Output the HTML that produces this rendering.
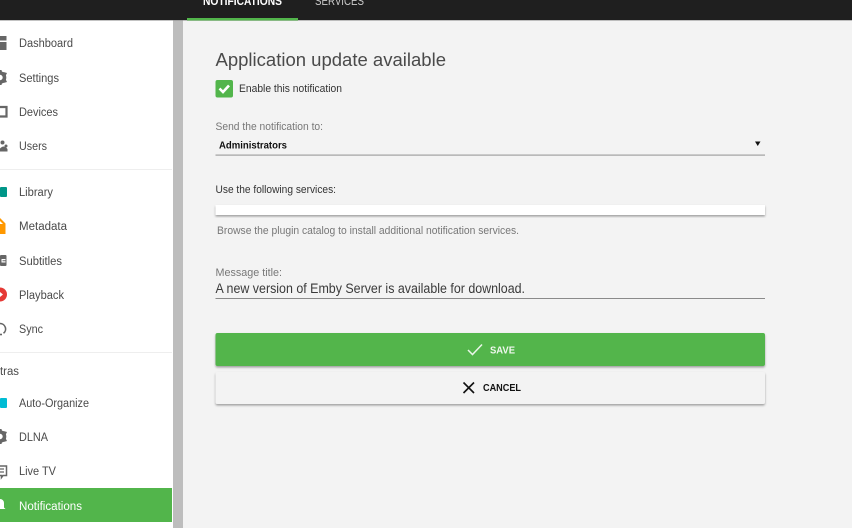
<!DOCTYPE html>
<html><head><meta charset="utf-8"><style>
html,body{margin:0;padding:0;width:852px;height:528px;overflow:hidden;background:#f3f3f3}
svg{display:block}
text{font-family:"Liberation Sans",sans-serif;font-size:11.500px;fill:#4a4a4a}
</style></head><body>
<svg width="852" height="528" viewBox="0 0 852 528" xmlns="http://www.w3.org/2000/svg">
<defs><filter id="s" x="-2%" y="-20%" width="104%" height="150%"><feDropShadow dx="0" dy="1.500" stdDeviation="1" flood-color="#000" flood-opacity=".35"/></filter></defs>
<rect width="852" height="528" fill="#f3f3f3"/>
<rect x="0" y="20" width="173" height="508" fill="#fff"/>
<rect x="173" y="20" width="10" height="508" fill="#bdbdbd"/>
<rect x="0" y="0" width="852" height="20" fill="#1f1f1f"/>
<rect x="0" y="20" width="852" height="1" fill="#888" opacity=".5"/>
<rect x="187" y="18" width="111" height="2.500" fill="#52b54b"/>
<text x="203" y="5" textLength="79" lengthAdjust="spacingAndGlyphs" style="fill:#fff;font-weight:bold;font-size:11.500px">NOTIFICATIONS</text>
<text x="315" y="5" textLength="49" lengthAdjust="spacingAndGlyphs" style="fill:#ccc;font-size:11.500px">SERVICES</text>

<rect x="0" y="169" width="172" height="1" fill="#eee"/>
<rect x="0" y="352" width="172" height="1" fill="#eee"/>

<text x="19" y="47" textLength="54" lengthAdjust="spacingAndGlyphs">Dashboard</text>
<text x="19" y="82" textLength="40" lengthAdjust="spacingAndGlyphs">Settings</text>
<text x="19" y="116" textLength="39" lengthAdjust="spacingAndGlyphs">Devices</text>
<text x="19" y="150" textLength="28" lengthAdjust="spacingAndGlyphs">Users</text>
<text x="19" y="196" textLength="34" lengthAdjust="spacingAndGlyphs">Library</text>
<text x="19" y="230" textLength="48" lengthAdjust="spacingAndGlyphs">Metadata</text>
<text x="19" y="265" textLength="43" lengthAdjust="spacingAndGlyphs">Subtitles</text>
<text x="19" y="299" textLength="45" lengthAdjust="spacingAndGlyphs">Playback</text>
<text x="19" y="333" textLength="24" lengthAdjust="spacingAndGlyphs">Sync</text>
<text x="0" y="375" textLength="19" lengthAdjust="spacingAndGlyphs">tras</text>
<text x="19" y="407" textLength="70" lengthAdjust="spacingAndGlyphs">Auto-Organize</text>
<text x="19" y="441" textLength="29" lengthAdjust="spacingAndGlyphs">DLNA</text>
<text x="19" y="475" textLength="37" lengthAdjust="spacingAndGlyphs">Live TV</text>
<rect x="0" y="488" width="172" height="34" fill="#52b54b"/>
<text x="19" y="510" textLength="63" lengthAdjust="spacingAndGlyphs" style="fill:#fff">Notifications</text>

<!-- sidebar icons -->
<path d="M0 36h6.500v4.500H0zM0 42h6.500v8H0z" fill="#666"/>
<circle cx="0" cy="77.500" r="4.500" fill="none" stroke="#666" stroke-width="3.600"/>
<path d="M-1.500 70h3l.5 2h-4zM-1.500 85h3l.5-2h-4zM3.500 72l3.500 1-1.500 3-3-1zM3.500 83l3.500-1-1.500-3-3 1z" fill="#666"/>
<path d="M0 107h6.500v9.500H0" fill="none" stroke="#666" stroke-width="2.200"/>
<circle cx="2.500" cy="142.500" r="2" fill="#666"/><circle cx="6" cy="146" r="1.500" fill="#666"/><path d="M0 151.500v-3q2-2 3.500-2 2 0 4 2.500v2.500z" fill="#666"/>
<rect x="0" y="187" width="7" height="10" rx="1" fill="#009688"/>
<path d="M0 218l5.500 5.500v10.500H0z" fill="#ff9800"/><path d="M0 221l3 3H0z" fill="#fff"/>
<rect x="0" y="255" width="6.500" height="11" rx="1" fill="#666"/><path d="M1.500 259h4v1.200h-3v1h3v1.300h-4z" fill="#fff"/>
<circle cx="0" cy="294.500" r="7" fill="#e53935"/><path d="M0 292v5l3-2.500z" fill="#fff"/>
<path d="M0 323.500a5.500 5.500 0 0 1 3.500 9.800" fill="none" stroke="#666" stroke-width="1.600"/>
<path d="M0 334.500h2" stroke="#666" stroke-width="1.600"/>
<rect x="0" y="398" width="7" height="10" rx="1" fill="#00bcd4"/>
<circle cx="0" cy="436.500" r="4.500" fill="none" stroke="#666" stroke-width="3.600"/>
<path d="M-1.500 429h3l.5 2h-4zM-1.500 444h3l.5-2h-4zM3.500 431l3.500 1-1.500 3-3-1zM3.500 442l3.500-1-1.500-3-3 1z" fill="#666"/>
<path d="M0 466h6.500v9.500H3L1.500 477.500V475.500H0" fill="none" stroke="#666" stroke-width="1.500"/><path d="M0 469h4M0 472h4" stroke="#666" stroke-width="1.200"/>
<path d="M0 499a4 4 0 0 1 4 4v4.500l1.500 1.500H0z" fill="#fff"/>

<!-- form -->
<text x="215.500" y="66" textLength="230.500" lengthAdjust="spacingAndGlyphs" style="font-size:18.500px;fill:#4a4a4a">Application update available</text>
<rect x="215.500" y="80" width="17.500" height="17.500" rx="2" fill="#52b54b"/>
<path d="M219.500 88.500l3.500 3.500 6-6.500" fill="none" stroke="#fff" stroke-width="2.600"/>
<text x="239" y="92" textLength="103" lengthAdjust="spacingAndGlyphs" style="font-size:11px;fill:#333">Enable this notification</text>

<text x="215.500" y="130" textLength="107.500" lengthAdjust="spacingAndGlyphs" style="font-size:11px;fill:#777">Send the notification to:</text>
<text x="219" y="148.500" textLength="68" lengthAdjust="spacingAndGlyphs" style="font-size:10.500px;font-weight:bold;fill:#111">Administrators</text>
<path d="M755 141.500h5.500l-2.750 4.500z" fill="#111"/>
<rect x="215.500" y="154.500" width="549.500" height="1.200" fill="#a0a0a0"/>

<text x="215.500" y="193" textLength="120.500" lengthAdjust="spacingAndGlyphs" style="font-size:11px;fill:#333">Use the following services:</text>
<rect x="215.500" y="205" width="549.500" height="10" fill="#fff" filter="url(#s)"/>
<text x="217" y="234" textLength="302" lengthAdjust="spacingAndGlyphs" style="font-size:11px;fill:#777">Browse the plugin catalog to install additional notification services.</text>

<text x="215.500" y="276" textLength="66.500" lengthAdjust="spacingAndGlyphs" style="font-size:11px;fill:#777">Message title:</text>
<text x="215.500" y="293" textLength="309.500" lengthAdjust="spacingAndGlyphs" style="font-size:13.500px;fill:#3a3a3a">A new version of Emby Server is available for download.</text>
<rect x="215.500" y="298" width="549.500" height="1" fill="#8a8a8a"/>

<rect x="215.500" y="333" width="549.500" height="33" rx="2" fill="#52b54b" filter="url(#s)"/>
<path d="M468 350l4.500 4.500 9.500-10" fill="none" stroke="#eaf6e9" stroke-width="1.500"/>
<text x="490" y="353.500" textLength="25" lengthAdjust="spacingAndGlyphs" style="font-size:10.500px;font-weight:bold;fill:#f0f8ef">SAVE</text>

<rect x="215.500" y="372" width="549.500" height="32" rx="2" fill="#f3f3f3" filter="url(#s)"/>
<path d="M463.500 382.500l10.500 10.500M474 382.500l-10.500 10.500" fill="none" stroke="#111" stroke-width="1.600"/>
<text x="483" y="391" textLength="38" lengthAdjust="spacingAndGlyphs" style="font-size:10.500px;font-weight:bold;fill:#111">CANCEL</text>
</svg>
</body></html>
